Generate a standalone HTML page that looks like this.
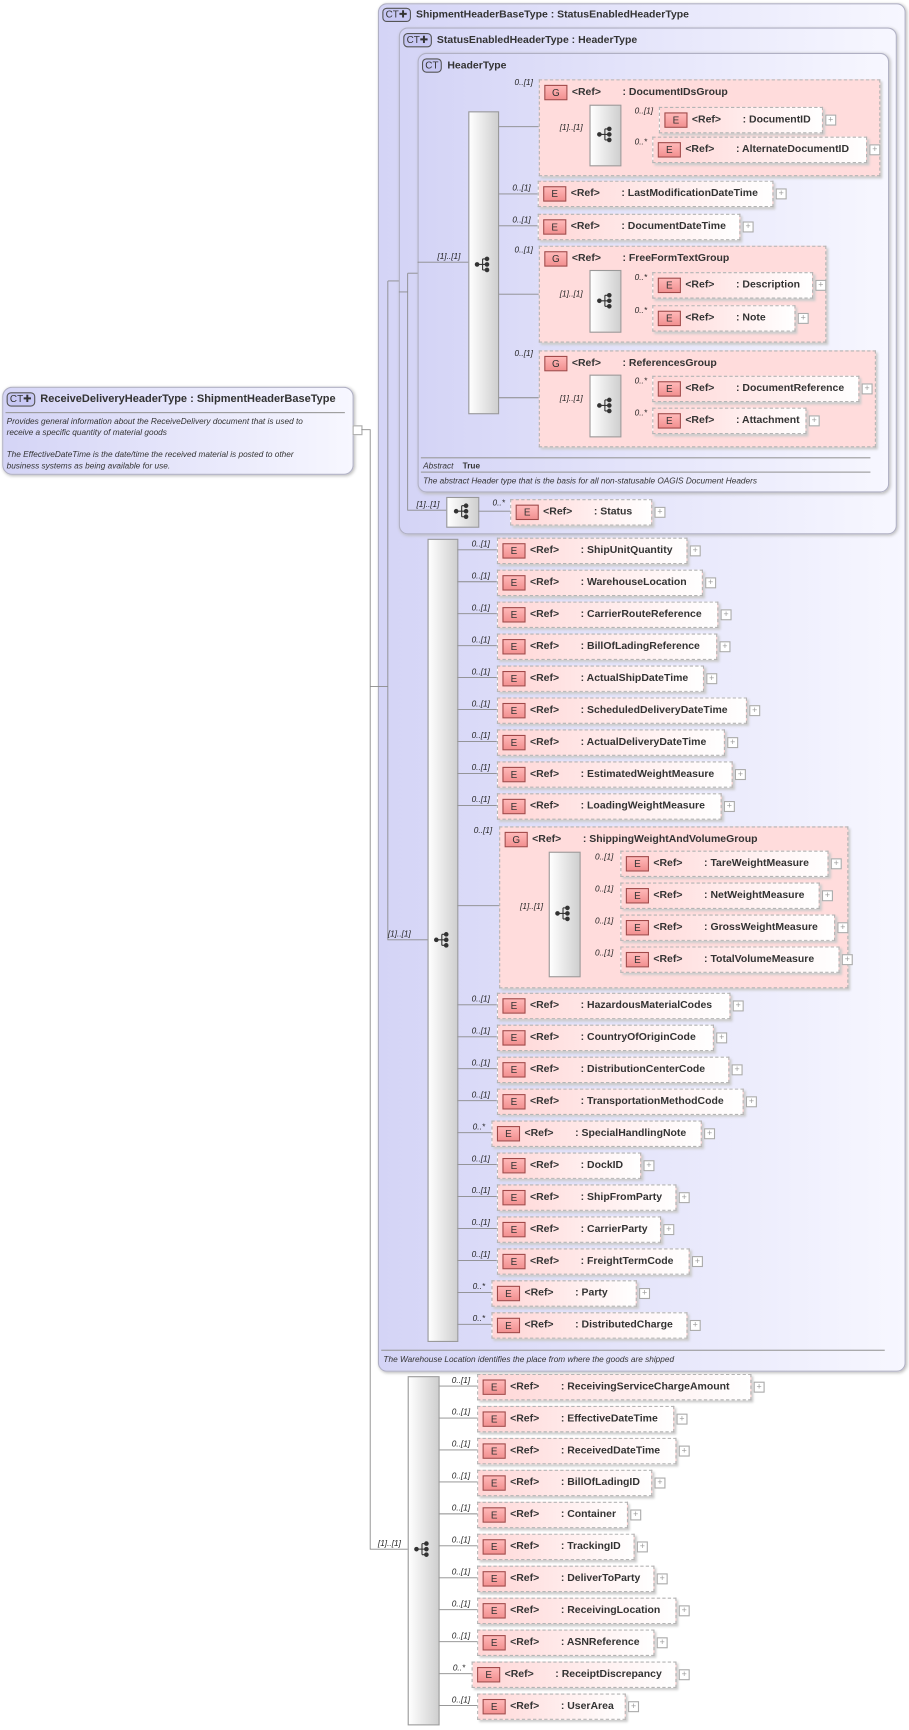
<!DOCTYPE html>
<html><head><meta charset="utf-8"><style>
body{margin:0;width:909px;height:1730px;overflow:hidden;background:#fff}
#w{position:absolute;left:0;top:0;width:825px;height:1570px;transform:scale(1.1018);transform-origin:0 0;font-family:"Liberation Sans",sans-serif;color:#222}
.b{position:absolute;border:1px solid #b0b0c4;border-radius:8px;background:linear-gradient(to right,#d4d4f6,#f7f7ff);box-shadow:1px 1px 3px #bbb}
.t{position:absolute;font-size:9.5px;font-weight:bold;white-space:nowrap;color:#333}
.ct{display:inline-block;border:1px solid #555;border-radius:4px;background:#c8c8f4;font-size:9px;font-weight:normal;padding:0 2px;margin-right:5px;line-height:11px}
.e,.g{position:absolute;border:1px dashed #b4b4b4;background:linear-gradient(to right,#ffd6d6,#fff);box-shadow:2px 2px 2px #ccc;font-size:9.5px;font-weight:bold;color:#333}
.e{height:22px}
.g{background:#ffdcdc}
.e i,.g i{position:absolute;left:4px;top:4px;width:19px;height:12px;border:1px solid #a04848;background:linear-gradient(#ffb8b8,#f29090);font-style:normal;font-weight:normal;text-align:center;line-height:12px;font-size:9px}
.e .r,.g .r{position:absolute;left:29px;top:5px}
.e .n,.g .n{position:absolute;left:75px;top:5px;white-space:nowrap}
.e::after{content:"+";position:absolute;right:-13px;top:6px;width:8px;height:8px;border:1px solid #aaa;background:#fff;font-size:8px;line-height:7px;text-align:center;color:#999;font-weight:normal}
.s{position:absolute;border:1px solid #999;background:linear-gradient(to right,#fff,#cfcfcf)}
.l{position:absolute;font-size:7.5px;font-style:italic;white-space:nowrap}
.d{position:absolute;font-size:7.5px;font-style:italic;white-space:nowrap;color:#333}
.hr{position:absolute;height:0;border-top:1px solid #999}
svg{position:absolute;left:0;top:0}
</style></head><body><div id="w">

<div class="b" style="left:2px;top:351px;width:317px;height:78px;border-radius:9px"></div>
<div class="t" style="left:6px;top:356px;font-size:10px"><span class="ct">CT✚</span>ReceiveDeliveryHeaderType : ShipmentHeaderBaseType</div>
<div class="hr" style="left:5px;top:374px;width:308px"></div>
<div class="d" style="left:6px;top:378px;line-height:10px">Provides general information about the ReceiveDelivery document that is used to<br>receive a specific quantity of material goods<br><br>The EffectiveDateTime is the date/time the received material is posted to other<br>business systems as being available for use.</div>
<div style="position:absolute;left:320px;top:386px;width:7px;height:7px;border:1px solid #aaa;background:#fff"></div>

<div class="b" style="left:343px;top:3px;width:477px;height:1240px"></div>
<div class="t" style="left:347px;top:7px"><span class="ct">CT✚</span>ShipmentHeaderBaseType : StatusEnabledHeaderType</div>
<div class="b" style="left:362px;top:25px;width:450px;height:458px"></div>
<div class="t" style="left:366px;top:30px"><span class="ct">CT✚</span>StatusEnabledHeaderType : HeaderType</div>
<div class="b" style="left:379px;top:48px;width:426px;height:397px"></div>
<div class="t" style="left:383px;top:53px"><span class="ct">CT</span>HeaderType</div>
<div class="hr" style="left:382px;top:415px;width:408px"></div>
<div class="d" style="left:384px;top:418px">Abstract &nbsp;&nbsp; <b style="font-style:normal">True</b></div>
<div class="hr" style="left:382px;top:428px;width:408px"></div>
<div class="d" style="left:384px;top:432px">The abstract Header type that is the basis for all non-statusable OAGIS Document Headers</div>
<div class="hr" style="left:346px;top:1225px;width:457px"></div>
<div class="d" style="left:348px;top:1229px">The Warehouse Location identifies the place from where the goods are shipped</div>

<svg width="825" height="1570" fill="none" stroke="#8a8a8a" stroke-width="0.8">
<path d="M328 390H336V1406H370M336 623H343H352M352 255V853H388M352 255H362M362 265H370M370 248V463H405M370 248H379M379 238H425
M451 115H489M451 176H488M451 205H488M451 267H489M451 361H489
M489 123H535M562 108H598M562 135H592M489 268H535M562 258H592M562 288H592M489 363H535M562 352H592M562 381H592M433 464H463
M414 499H451M414 528H451M414 557H451M414 586H451M414 615H451M414 644H451M414 673H451M414 702H451M414 731H451M414 822H498M525 783H563M525 812H563M525 841H563M525 870H563
M414 912H451M414 941H451M414 970H451M414 999H451M414 1028H446M414 1057H451M414 1086H451M414 1115H451M414 1144H451M414 1173H446M414 1202H446
M397 1258H433M397 1287H433M397 1316H433M397 1345H433M397 1374H433M397 1403H433M397 1432H433M397 1461H433M397 1490H433M397 1519H428M397 1548H433"/>
<symbol id="q" viewBox="0 0 16 16"><g fill="#333" stroke="#333" stroke-width="1"><circle cx="3" cy="8" r="1.6"/><path d="M3 8H8M8 3V13M8 3H12M8 8H12M8 13H12"/><circle cx="12" cy="3" r="1.6"/><circle cx="12" cy="8" r="1.6"/><circle cx="12" cy="13" r="1.6"/></g></symbol>
</svg>

<div class="s" style="left:425px;top:101px;width:26px;height:273px"></div>
<div class="g" style="left:489px;top:72px;width:308px;height:86px"><i>G</i><span class="r">&lt;Ref&gt;</span><span class="n">: DocumentIDsGroup</span></div>
<div class="s" style="left:535px;top:95px;width:27px;height:54px"></div>
<div class="e" style="left:598px;top:97px;width:147px"><i>E</i><span class="r">&lt;Ref&gt;</span><span class="n">: DocumentID</span></div>
<div class="e" style="left:592px;top:124px;width:193px"><i>E</i><span class="r">&lt;Ref&gt;</span><span class="n">: AlternateDocumentID</span></div>
<div class="e" style="left:488px;top:164px;width:212px"><i>E</i><span class="r">&lt;Ref&gt;</span><span class="n">: LastModificationDateTime</span></div>
<div class="e" style="left:488px;top:194px;width:182px"><i>E</i><span class="r">&lt;Ref&gt;</span><span class="n">: DocumentDateTime</span></div>
<div class="g" style="left:489px;top:223px;width:259px;height:86px"><i>G</i><span class="r">&lt;Ref&gt;</span><span class="n">: FreeFormTextGroup</span></div>
<div class="s" style="left:535px;top:245px;width:27px;height:55px"></div>
<div class="e" style="left:592px;top:247px;width:144px"><i>E</i><span class="r">&lt;Ref&gt;</span><span class="n">: Description</span></div>
<div class="e" style="left:592px;top:277px;width:128px"><i>E</i><span class="r">&lt;Ref&gt;</span><span class="n">: Note</span></div>
<div class="g" style="left:489px;top:318px;width:304px;height:86px"><i>G</i><span class="r">&lt;Ref&gt;</span><span class="n">: ReferencesGroup</span></div>
<div class="s" style="left:535px;top:340px;width:27px;height:55px"></div>
<div class="e" style="left:592px;top:341px;width:186px"><i>E</i><span class="r">&lt;Ref&gt;</span><span class="n">: DocumentReference</span></div>
<div class="e" style="left:592px;top:370px;width:138px"><i>E</i><span class="r">&lt;Ref&gt;</span><span class="n">: Attachment</span></div>
<div class="s" style="left:405px;top:451px;width:28px;height:26px"></div>
<div class="e" style="left:463px;top:453px;width:127px"><i>E</i><span class="r">&lt;Ref&gt;</span><span class="n">: Status</span></div>

<div class="s" style="left:388px;top:489px;width:26px;height:727px"></div>
<div class="e" style="left:451px;top:488px;width:171px"><i>E</i><span class="r">&lt;Ref&gt;</span><span class="n">: ShipUnitQuantity</span></div>
<div class="e" style="left:451px;top:517px;width:185px"><i>E</i><span class="r">&lt;Ref&gt;</span><span class="n">: WarehouseLocation</span></div>
<div class="e" style="left:451px;top:546px;width:199px"><i>E</i><span class="r">&lt;Ref&gt;</span><span class="n">: CarrierRouteReference</span></div>
<div class="e" style="left:451px;top:575px;width:198px"><i>E</i><span class="r">&lt;Ref&gt;</span><span class="n">: BillOfLadingReference</span></div>
<div class="e" style="left:451px;top:604px;width:186px"><i>E</i><span class="r">&lt;Ref&gt;</span><span class="n">: ActualShipDateTime</span></div>
<div class="e" style="left:451px;top:633px;width:225px"><i>E</i><span class="r">&lt;Ref&gt;</span><span class="n">: ScheduledDeliveryDateTime</span></div>
<div class="e" style="left:451px;top:662px;width:205px"><i>E</i><span class="r">&lt;Ref&gt;</span><span class="n">: ActualDeliveryDateTime</span></div>
<div class="e" style="left:451px;top:691px;width:212px"><i>E</i><span class="r">&lt;Ref&gt;</span><span class="n">: EstimatedWeightMeasure</span></div>
<div class="e" style="left:451px;top:720px;width:202px"><i>E</i><span class="r">&lt;Ref&gt;</span><span class="n">: LoadingWeightMeasure</span></div>
<div class="g" style="left:453px;top:750px;width:315px;height:145px"><i>G</i><span class="r">&lt;Ref&gt;</span><span class="n">: ShippingWeightAndVolumeGroup</span></div>
<div class="s" style="left:498px;top:773px;width:27px;height:112px"></div>
<div class="e" style="left:563px;top:772px;width:187px"><i>E</i><span class="r">&lt;Ref&gt;</span><span class="n">: TareWeightMeasure</span></div>
<div class="e" style="left:563px;top:801px;width:179px"><i>E</i><span class="r">&lt;Ref&gt;</span><span class="n">: NetWeightMeasure</span></div>
<div class="e" style="left:563px;top:830px;width:193px"><i>E</i><span class="r">&lt;Ref&gt;</span><span class="n">: GrossWeightMeasure</span></div>
<div class="e" style="left:563px;top:859px;width:197px"><i>E</i><span class="r">&lt;Ref&gt;</span><span class="n">: TotalVolumeMeasure</span></div>
<div class="e" style="left:451px;top:901px;width:210px"><i>E</i><span class="r">&lt;Ref&gt;</span><span class="n">: HazardousMaterialCodes</span></div>
<div class="e" style="left:451px;top:930px;width:195px"><i>E</i><span class="r">&lt;Ref&gt;</span><span class="n">: CountryOfOriginCode</span></div>
<div class="e" style="left:451px;top:959px;width:209px"><i>E</i><span class="r">&lt;Ref&gt;</span><span class="n">: DistributionCenterCode</span></div>
<div class="e" style="left:451px;top:988px;width:222px"><i>E</i><span class="r">&lt;Ref&gt;</span><span class="n">: TransportationMethodCode</span></div>
<div class="e" style="left:446px;top:1017px;width:189px"><i>E</i><span class="r">&lt;Ref&gt;</span><span class="n">: SpecialHandlingNote</span></div>
<div class="e" style="left:451px;top:1046px;width:129px"><i>E</i><span class="r">&lt;Ref&gt;</span><span class="n">: DockID</span></div>
<div class="e" style="left:451px;top:1075px;width:161px"><i>E</i><span class="r">&lt;Ref&gt;</span><span class="n">: ShipFromParty</span></div>
<div class="e" style="left:451px;top:1104px;width:147px"><i>E</i><span class="r">&lt;Ref&gt;</span><span class="n">: CarrierParty</span></div>
<div class="e" style="left:451px;top:1133px;width:173px"><i>E</i><span class="r">&lt;Ref&gt;</span><span class="n">: FreightTermCode</span></div>
<div class="e" style="left:446px;top:1162px;width:130px"><i>E</i><span class="r">&lt;Ref&gt;</span><span class="n">: Party</span></div>
<div class="e" style="left:446px;top:1191px;width:176px"><i>E</i><span class="r">&lt;Ref&gt;</span><span class="n">: DistributedCharge</span></div>

<div class="s" style="left:370px;top:1249px;width:27px;height:315px"></div>
<div class="e" style="left:433px;top:1247px;width:247px"><i>E</i><span class="r">&lt;Ref&gt;</span><span class="n">: ReceivingServiceChargeAmount</span></div>
<div class="e" style="left:433px;top:1276px;width:177px"><i>E</i><span class="r">&lt;Ref&gt;</span><span class="n">: EffectiveDateTime</span></div>
<div class="e" style="left:433px;top:1305px;width:179px"><i>E</i><span class="r">&lt;Ref&gt;</span><span class="n">: ReceivedDateTime</span></div>
<div class="e" style="left:433px;top:1334px;width:157px"><i>E</i><span class="r">&lt;Ref&gt;</span><span class="n">: BillOfLadingID</span></div>
<div class="e" style="left:433px;top:1363px;width:135px"><i>E</i><span class="r">&lt;Ref&gt;</span><span class="n">: Container</span></div>
<div class="e" style="left:433px;top:1392px;width:141px"><i>E</i><span class="r">&lt;Ref&gt;</span><span class="n">: TrackingID</span></div>
<div class="e" style="left:433px;top:1421px;width:159px"><i>E</i><span class="r">&lt;Ref&gt;</span><span class="n">: DeliverToParty</span></div>
<div class="e" style="left:433px;top:1450px;width:179px"><i>E</i><span class="r">&lt;Ref&gt;</span><span class="n">: ReceivingLocation</span></div>
<div class="e" style="left:433px;top:1479px;width:159px"><i>E</i><span class="r">&lt;Ref&gt;</span><span class="n">: ASNReference</span></div>
<div class="e" style="left:428px;top:1508px;width:184px"><i>E</i><span class="r">&lt;Ref&gt;</span><span class="n">: ReceiptDiscrepancy</span></div>
<div class="e" style="left:433px;top:1537px;width:133px"><i>E</i><span class="r">&lt;Ref&gt;</span><span class="n">: UserArea</span></div>

<svg width="825" height="1570"><use href="#q" x="430" y="232" width="16" height="16"/><use href="#q" x="541" y="114" width="16" height="16"/><use href="#q" x="541" y="265" width="16" height="16"/><use href="#q" x="541" y="360" width="16" height="16"/><use href="#q" x="411" y="456" width="16" height="16"/><use href="#q" x="393" y="845" width="16" height="16"/><use href="#q" x="503" y="821" width="16" height="16"/><use href="#q" x="375" y="1398" width="16" height="16"/></svg>

<div class="l" style="left:467px;top:70px">0..[1]</div>
<div class="l" style="left:508px;top:111px">[1]..[1]</div>
<div class="l" style="left:576px;top:96px">0..[1]</div>
<div class="l" style="left:576px;top:124px">0..*</div>
<div class="l" style="left:465px;top:166px">0..[1]</div>
<div class="l" style="left:465px;top:195px">0..[1]</div>
<div class="l" style="left:467px;top:222px">0..[1]</div>
<div class="l" style="left:508px;top:262px">[1]..[1]</div>
<div class="l" style="left:576px;top:247px">0..*</div>
<div class="l" style="left:576px;top:277px">0..*</div>
<div class="l" style="left:467px;top:316px">0..[1]</div>
<div class="l" style="left:508px;top:357px">[1]..[1]</div>
<div class="l" style="left:576px;top:341px">0..*</div>
<div class="l" style="left:576px;top:370px">0..*</div>
<div class="l" style="left:397px;top:228px">[1]..[1]</div>
<div class="l" style="left:378px;top:453px">[1]..[1]</div>
<div class="l" style="left:447px;top:452px">0..*</div>
<div class="l" style="left:352px;top:843px">[1]..[1]</div>
<div class="l" style="left:428px;top:489px">0..[1]</div>
<div class="l" style="left:428px;top:518px">0..[1]</div>
<div class="l" style="left:428px;top:547px">0..[1]</div>
<div class="l" style="left:428px;top:576px">0..[1]</div>
<div class="l" style="left:428px;top:605px">0..[1]</div>
<div class="l" style="left:428px;top:634px">0..[1]</div>
<div class="l" style="left:428px;top:663px">0..[1]</div>
<div class="l" style="left:428px;top:692px">0..[1]</div>
<div class="l" style="left:428px;top:721px">0..[1]</div>
<div class="l" style="left:430px;top:749px">0..[1]</div>
<div class="l" style="left:472px;top:818px">[1]..[1]</div>
<div class="l" style="left:540px;top:773px">0..[1]</div>
<div class="l" style="left:540px;top:802px">0..[1]</div>
<div class="l" style="left:540px;top:831px">0..[1]</div>
<div class="l" style="left:540px;top:860px">0..[1]</div>
<div class="l" style="left:428px;top:902px">0..[1]</div>
<div class="l" style="left:428px;top:931px">0..[1]</div>
<div class="l" style="left:428px;top:960px">0..[1]</div>
<div class="l" style="left:428px;top:989px">0..[1]</div>
<div class="l" style="left:429px;top:1018px">0..*</div>
<div class="l" style="left:428px;top:1047px">0..[1]</div>
<div class="l" style="left:428px;top:1076px">0..[1]</div>
<div class="l" style="left:428px;top:1105px">0..[1]</div>
<div class="l" style="left:428px;top:1134px">0..[1]</div>
<div class="l" style="left:429px;top:1163px">0..*</div>
<div class="l" style="left:429px;top:1192px">0..*</div>
<div class="l" style="left:343px;top:1396px">[1]..[1]</div>
<div class="l" style="left:410px;top:1248px">0..[1]</div>
<div class="l" style="left:410px;top:1277px">0..[1]</div>
<div class="l" style="left:410px;top:1306px">0..[1]</div>
<div class="l" style="left:410px;top:1335px">0..[1]</div>
<div class="l" style="left:410px;top:1364px">0..[1]</div>
<div class="l" style="left:410px;top:1393px">0..[1]</div>
<div class="l" style="left:410px;top:1422px">0..[1]</div>
<div class="l" style="left:410px;top:1451px">0..[1]</div>
<div class="l" style="left:410px;top:1480px">0..[1]</div>
<div class="l" style="left:411px;top:1509px">0..*</div>
<div class="l" style="left:410px;top:1538px">0..[1]</div>
</div></body></html>
